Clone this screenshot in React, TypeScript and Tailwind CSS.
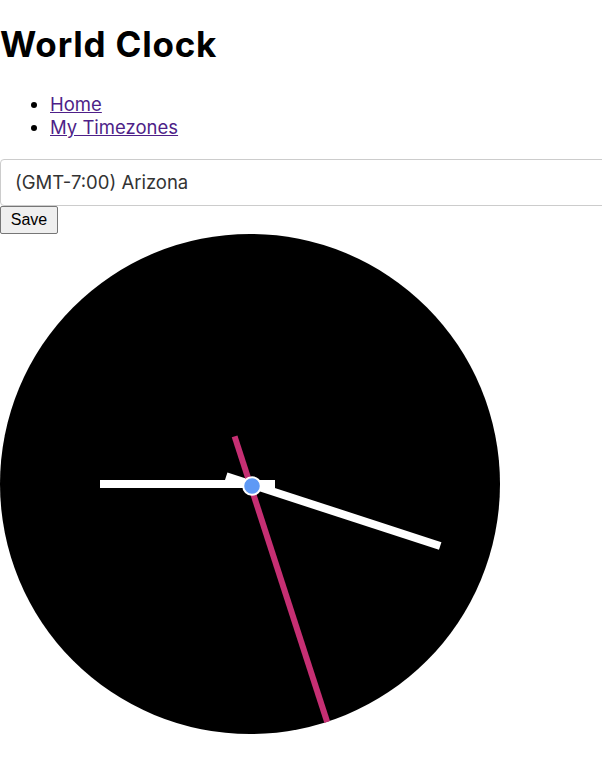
import React from "react";

export default function App() {
  return (
    <div className="w-[602px] overflow-hidden bg-white font-['Inter','Helvetica','Arial',sans-serif] text-black">
      {/* Header */}
      <h1 className="mt-[23px] mb-[28px] text-[35px] font-bold leading-[42px] tracking-[0.8px]">
        World Clock
      </h1>
      {/* Nav */}
      <ul className="mb-[20px] list-disc pl-[50px] text-[18.5px] leading-[23px]">
        <li>
          <a href="#" className="text-[#4e1f88] underline">
            Home
          </a>
        </li>
        <li>
          <a href="#" className="text-[#4e1f88] underline">
            My Timezones
          </a>
        </li>
      </ul>
      {/* Timezone select */}
      <div className="flex h-[47px] w-[640px] items-center rounded border border-[#cccccc] bg-white pl-[14px] text-[18.5px] text-[#333333]">
        (GMT-7:00) Arizona
      </div>
      <button className="block h-[28px] w-[58px] rounded-[2px] border border-[#767676] bg-[#efefef] font-['Liberation_Sans',Arial,sans-serif] text-[16px] leading-none text-black">
        Save
      </button>
      {/* Clock */}
      <svg width="500" height="500" viewBox="0 0 500 500" className="block">
        <circle cx="250" cy="250" r="250" fill="#000" />
        {/* hour */}
        <line x1="100" y1="250" x2="275" y2="250" stroke="#fff" strokeWidth="8" />
        {/* minute */}
        <line x1="226.2" y1="242.3" x2="440.2" y2="312" stroke="#fff" strokeWidth="8" />
        {/* second */}
        <line x1="234.6" y1="202.4" x2="327.2" y2="488" stroke="#c62f73" strokeWidth="6" />
        <circle cx="252" cy="252" r="8.8" fill="#5e99f5" stroke="#fff" strokeWidth="2" />
      </svg>
    </div>
  );
}
